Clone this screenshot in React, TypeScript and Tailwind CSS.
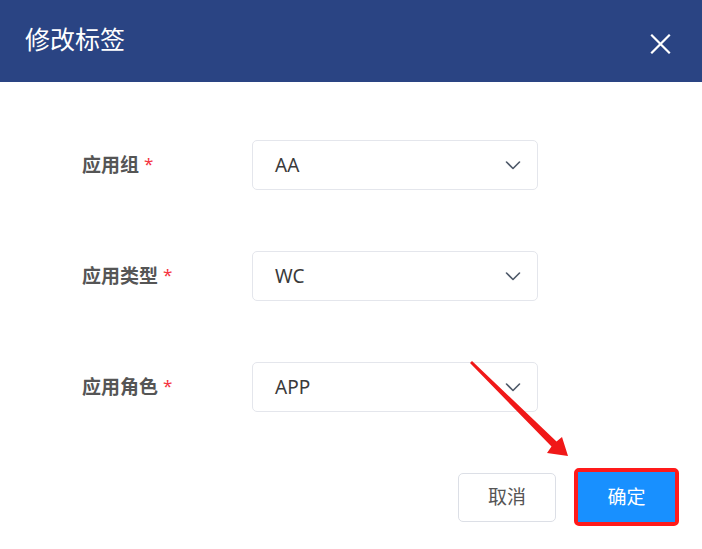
import React from 'react';

const fields = [
    { label: '应用组', value: 'AA' },
    { label: '应用类型', value: 'WC' },
    { label: '应用角色', value: 'APP' },
];

const Chevron = () => (
    <svg width="18" height="18" viewBox="0 0 18 18" fill="none" stroke="#4e5969" strokeWidth="1.6" strokeLinecap="round" strokeLinejoin="round">
        <path d="M2.5 6 L9 12.5 L15.5 6" />
    </svg>
);

const App = () => {
    return (
        <div
            className="relative w-[702px] h-[549px] bg-white overflow-hidden"
            style={{ fontFamily: '"Noto Sans", "Noto Sans CJK SC", sans-serif' }}
        >
            {/* header */}
            <div className="h-[82px] bg-[#2a4483] flex items-center justify-between pl-[25px] pr-[31px]">
                <h1 className="text-[25px] text-white leading-none -mt-[4px]">修改标签</h1>
                <svg width="21" height="20" viewBox="0 0 21 20" stroke="white" strokeWidth="2.2" strokeLinecap="square" className="mt-[6px]">
                    <path d="M2 1.5 L19 18.5 M19 1.5 L2 18.5" />
                </svg>
            </div>

            {/* form */}
            <div className="flex flex-col gap-[61px] pt-[58px] pl-[82px]">
                {fields.map((f) => (
                    <div key={f.label} className="flex items-center">
                        <div className="w-[170px] text-[19px] font-bold text-[#555555] flex items-start">
                            {f.label}
                            <span className="text-[#f5353f] ml-[5px] font-normal text-[17px] leading-none mt-[4px]">*</span>
                        </div>
                        <div className="w-[286px] h-[50px] border border-[#e4e6ec] rounded-[5px] flex items-center justify-between pl-[22px] pr-[15px]">
                            <span className="text-[19px] text-[#3a3a3a]">{f.value}</span>
                            <Chevron />
                        </div>
                    </div>
                ))}
            </div>

            {/* footer */}
            <div className="flex justify-end items-center gap-[18px] pr-[23px] mt-[56px]">
                <button className="w-[98px] h-[49px] border border-[#dcdfe6] rounded-[5px] text-[19px] text-[#555555] bg-white">
                    取消
                </button>
                <div className="border-4 border-[#ff1a1a] rounded-[5px]">
                    <button className="w-[97px] h-[50px] bg-[#1890ff] text-white text-[19px]">
                        确定
                    </button>
                </div>
            </div>

            {/* annotation arrow */}
            <svg className="absolute left-0 top-0 pointer-events-none" width="702" height="549">
                <path d="M470 363 L472 361 L556.5 441.5 L562 437 L568 456 L547 453 L551.5 446.5 Z" fill="#f01818" />
            </svg>
        </div>
    );
};

export default App;
